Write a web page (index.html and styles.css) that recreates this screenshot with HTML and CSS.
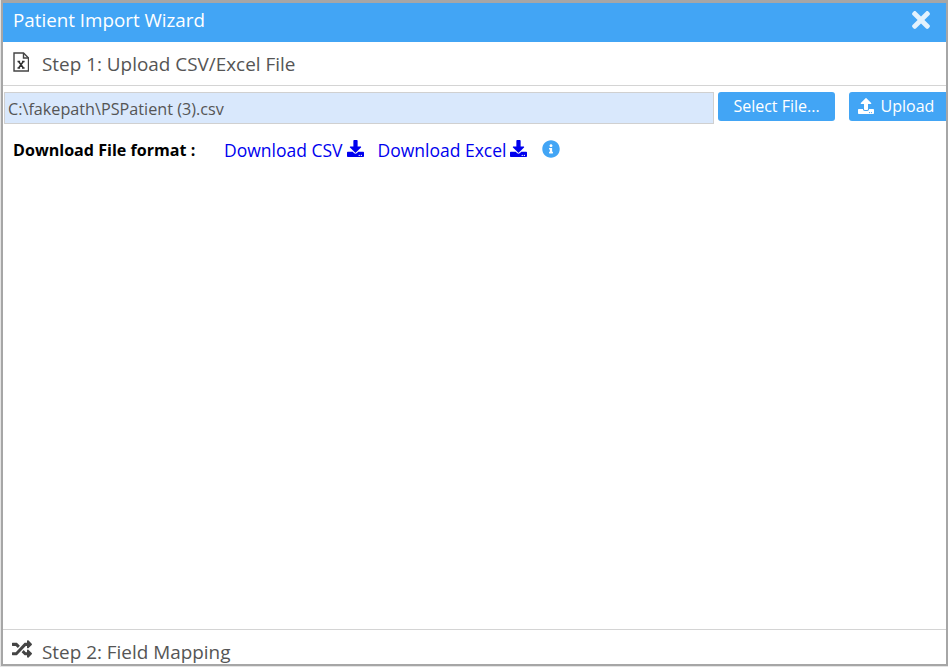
FILE: index.html
```html
<!DOCTYPE html>
<html lang="en">
<head>
<meta charset="utf-8">
<title>Patient Import Wizard</title>
<link rel="stylesheet" href="styles.css">
</head>
<body>
<div class="window">
  <header class="titlebar">
    <span class="title">Patient Import Wizard</span>
    <svg class="close" viewBox="0 0 352 512"><path d="M242.72 256l100.07-100.07c12.28-12.28 12.28-32.19 0-44.48l-22.24-22.24c-12.28-12.28-32.19-12.28-44.48 0L176 189.28 75.93 89.21c-12.28-12.28-32.19-12.28-44.48 0L9.21 111.45c-12.28 12.28-12.28 32.19 0 44.48L109.28 256 9.21 356.07c-12.28 12.28-12.28 32.19 0 44.48l22.24 22.24c12.28 12.28 32.2 12.28 44.48 0L176 322.72l100.07 100.07c12.28 12.28 32.2 12.28 44.48 0l22.24-22.24c12.28-12.28 12.28-32.19 0-44.48L242.72 256z"/></svg>
  </header>
  <div class="step step-one">
    <svg class="file-icon" viewBox="0 0 16 20"><path class="file-outline" d="M1 1h9.500L15.500 6v13H1z"/><path class="file-outline" d="M10.500 1v5h5"/><path class="file-x" d="M4.500 9.500h2.600M9 9.500h2.600M5.600 9.500l4.800 6.500M10.300 9.500l-4.700 6.500M4.500 16h2.600M9 16h2.600"/></svg>
    <span>Step 1: Upload CSV/Excel File</span>
  </div>
  <main class="content">
    <div class="upload-row">
      <div class="file-name">C:\fakepath\PSPatient (3).csv</div>
      <button class="btn btn-select">Select File...</button>
      <button class="btn btn-upload">
        <svg class="btn-icon" viewBox="0 0 512 512"><path d="M296 384h-80c-13.3 0-24-10.7-24-24V192h-87.700c-17.800 0-26.700-21.500-14.100-34.100L242.300 5.700c7.500-7.500 19.800-7.500 27.300 0l152.200 152.200c12.600 12.600 3.700 34.100-14.100 34.100H320v168c0 13.300-10.700 24-24 24zm216-8v112c0 13.300-10.700 24-24 24H24c-13.300 0-24-10.700-24-24V376c0-13.300 10.700-24 24-24h136v8c0 30.900 25.100 56 56 56h80c30.900 0 56-25.100 56-56v-8h136c13.300 0 24 10.700 24 24zm-124 88c0-11-9-20-20-20s-20 9-20 20 9 20 20 20 20-9 20-20zm64 0c0-11-9-20-20-20s-20 9-20 20 9 20 20 20 20-9 20-20z"/></svg>
        Upload
      </button>
    </div>
    <div class="format-row">
      <b class="format-label">Download File format :</b>
      <a class="dl dl-csv" href="#">Download CSV<svg class="dl-icon" viewBox="0 0 512 512"><path d="M216 0h80c13.300 0 24 10.700 24 24v168h87.700c17.800 0 26.700 21.500 14.100 34.100L269.700 378.300c-7.500 7.500-19.800 7.500-27.300 0L90.100 226.100c-12.600-12.600-3.700-34.100 14.100-34.100H192V24c0-13.300 10.700-24 24-24zm296 376v112c0 13.300-10.700 24-24 24H24c-13.300 0-24-10.700-24-24V376c0-13.300 10.700-24 24-24h146.700l49 49c20.100 20.100 52.500 20.100 72.600 0l49-49H488c13.300 0 24 10.700 24 24zm-124 88c0-11-9-20-20-20s-20 9-20 20 9 20 20 20 20-9 20-20zm64 0c0-11-9-20-20-20s-20 9-20 20 9 20 20 20 20-9 20-20z"/></svg></a>
      <a class="dl dl-excel" href="#">Download Excel<svg class="dl-icon" viewBox="0 0 512 512"><path d="M216 0h80c13.300 0 24 10.700 24 24v168h87.700c17.800 0 26.700 21.500 14.100 34.100L269.700 378.300c-7.500 7.500-19.800 7.500-27.300 0L90.100 226.100c-12.600-12.600-3.700-34.100 14.100-34.100H192V24c0-13.300 10.700-24 24-24zm296 376v112c0 13.300-10.700 24-24 24H24c-13.300 0-24-10.700-24-24V376c0-13.300 10.700-24 24-24h146.700l49 49c20.100 20.100 52.500 20.100 72.600 0l49-49H488c13.300 0 24 10.700 24 24zm-124 88c0-11-9-20-20-20s-20 9-20 20 9 20 20 20 20-9 20-20zm64 0c0-11-9-20-20-20s-20 9-20 20 9 20 20 20 20-9 20-20z"/></svg></a>
      <svg class="info-icon" viewBox="0 0 512 512"><path d="M256 8C119 8 8 119.100 8 256c0 137 111 248 248 248s248-111 248-248C504 119.100 393 8 256 8zm0 110c23.200 0 42 18.800 42 42s-18.800 42-42 42-42-18.800-42-42 18.800-42 42-42zm56 254c0 6.600-5.400 12-12 12h-88c-6.600 0-12-5.400-12-12v-24c0-6.600 5.400-12 12-12h12v-64h-12c-6.600 0-12-5.400-12-12v-24c0-6.600 5.400-12 12-12h64c6.600 0 12 5.400 12 12v100h12c6.600 0 12 5.400 12 12v24z"/></svg>
    </div>
  </main>
  <div class="step step-two">
    <svg class="random-icon" viewBox="0 0 512 512"><path d="M504.971 359.029c9.373 9.373 9.373 24.569 0 33.941l-80 79.984c-15.010 15.010-40.971 4.490-40.971-16.971V416h-58.785a12.004 12.004 0 0 1-8.773-3.812l-70.556-75.596 53.333-57.143L352 336h32v-39.981c0-21.438 25.943-31.998 40.971-16.971l80 79.981zM12 176h84l52.781 56.551 53.333-57.143-70.556-75.596A11.999 11.999 0 0 0 122.785 96H12c-6.627 0-12 5.373-12 12v56c0 6.627 5.373 12 12 12zm372 0v39.984c0 21.460 25.961 31.980 40.971 16.971l80-79.984c9.373-9.373 9.373-24.569 0-33.941l-80-79.981C409.943 24.021 384 34.582 384 56.019V96h-58.785a12.004 12.004 0 0 0-8.773 3.812L96 336H12c-6.627 0-12 5.373-12 12v56c0 6.627 5.373 12 12 12h110.785c3.326 0 6.503-1.381 8.773-3.812L352 176h32z"/></svg>
    <span>Step 2: Field Mapping</span>
  </div>
</div>
</body>
</html>
```

FILE: styles.css
```css
* { box-sizing: border-box; }
html, body { margin: 0; padding: 0; height: 100%; background: #e4e4e4; overflow: hidden; }
body { font-family: "Open Sans", sans-serif; }

.window {
  height: 666px;
  margin-left: 1px;
  display: flex;
  flex-direction: column;
  background: #fff;
  border-style: solid;
  border-color: #a6a6a6;
  border-width: 3px 2px 2px 2px;
  overflow: hidden;
}

.titlebar {
  flex: none;
  height: 39px;
  background: #42a5f5;
  color: #fff;
  display: flex;
  align-items: center;
  justify-content: space-between;
  padding: 0 15px 6px 10px;
}
.title { font-size: 18.8px; line-height: 24px; }
.close { width: 20px; height: 26px; fill: #e3f2fd; margin-top: 1px; }

.step {
  flex: none;
  display: flex;
  align-items: center;
  gap: 13px;
  padding-left: 10px;
  color: #555;
  font-size: 18.9px;
}
.step-one { height: 44px; border-bottom: 1px solid #d4d4d4; }
.step-two { height: 35px; border-top: 1px solid #d4d4d4; padding-top: 10px; }

.file-icon { width: 16px; height: 20px; margin-top: -4px; }
.file-outline { fill: none; stroke: #444; stroke-width: 1.400; }
.file-x { fill: none; stroke: #333; stroke-width: 1.500; }
.random-icon { width: 20px; height: 20px; fill: #444; margin-top: -6px; margin-left: -1px; margin-right: -3px; }

.content { flex: 1; min-height: 0; }

.upload-row {
  display: flex;
  align-items: flex-start;
  margin-top: 6px;
  white-space: nowrap;
}
.file-name {
  width: 710px;
  margin-left: 1px;
  height: 32px;
  background: #d9e8fc;
  border: 1px solid #d0d0d0;
  color: #555;
  font-size: 16.2px;
  line-height: 32px;
  padding-left: 3px;
}
.btn {
  height: 29px;
  border: 0;
  border-radius: 3px;
  background: #42a5f5;
  color: #fff;
  font-family: inherit;
  font-size: 16px;
  padding: 0 0 2px;
  display: flex;
  align-items: center;
  justify-content: center;
}
.btn-select { width: 117px; margin-left: 4px; }
.btn-upload { width: 97px; margin-left: 14px; gap: 7px; padding-right: 3px; border-radius: 3px 0 0 3px; }
.btn-icon { width: 16px; height: 16px; fill: #fff; }

.format-row {
  display: flex;
  align-items: center;
  height: 24px;
  margin-top: 14px;
  padding-left: 10px;
  white-space: nowrap;
}
.format-label { color: #000; font-size: 16.1px; width: 211px; font-weight: 700; }
.dl { color: #0000ee; font-size: 17.5px; text-decoration: none; display: flex; align-items: center; gap: 4px; }
.dl-excel { margin-left: 14px; }
.dl-icon { width: 17px; height: 17px; fill: #0000ee; margin-top: -3px; }
.info-icon { width: 18px; height: 18px; fill: #42a5f5; margin-left: 15px; margin-top: -3px; }
```
